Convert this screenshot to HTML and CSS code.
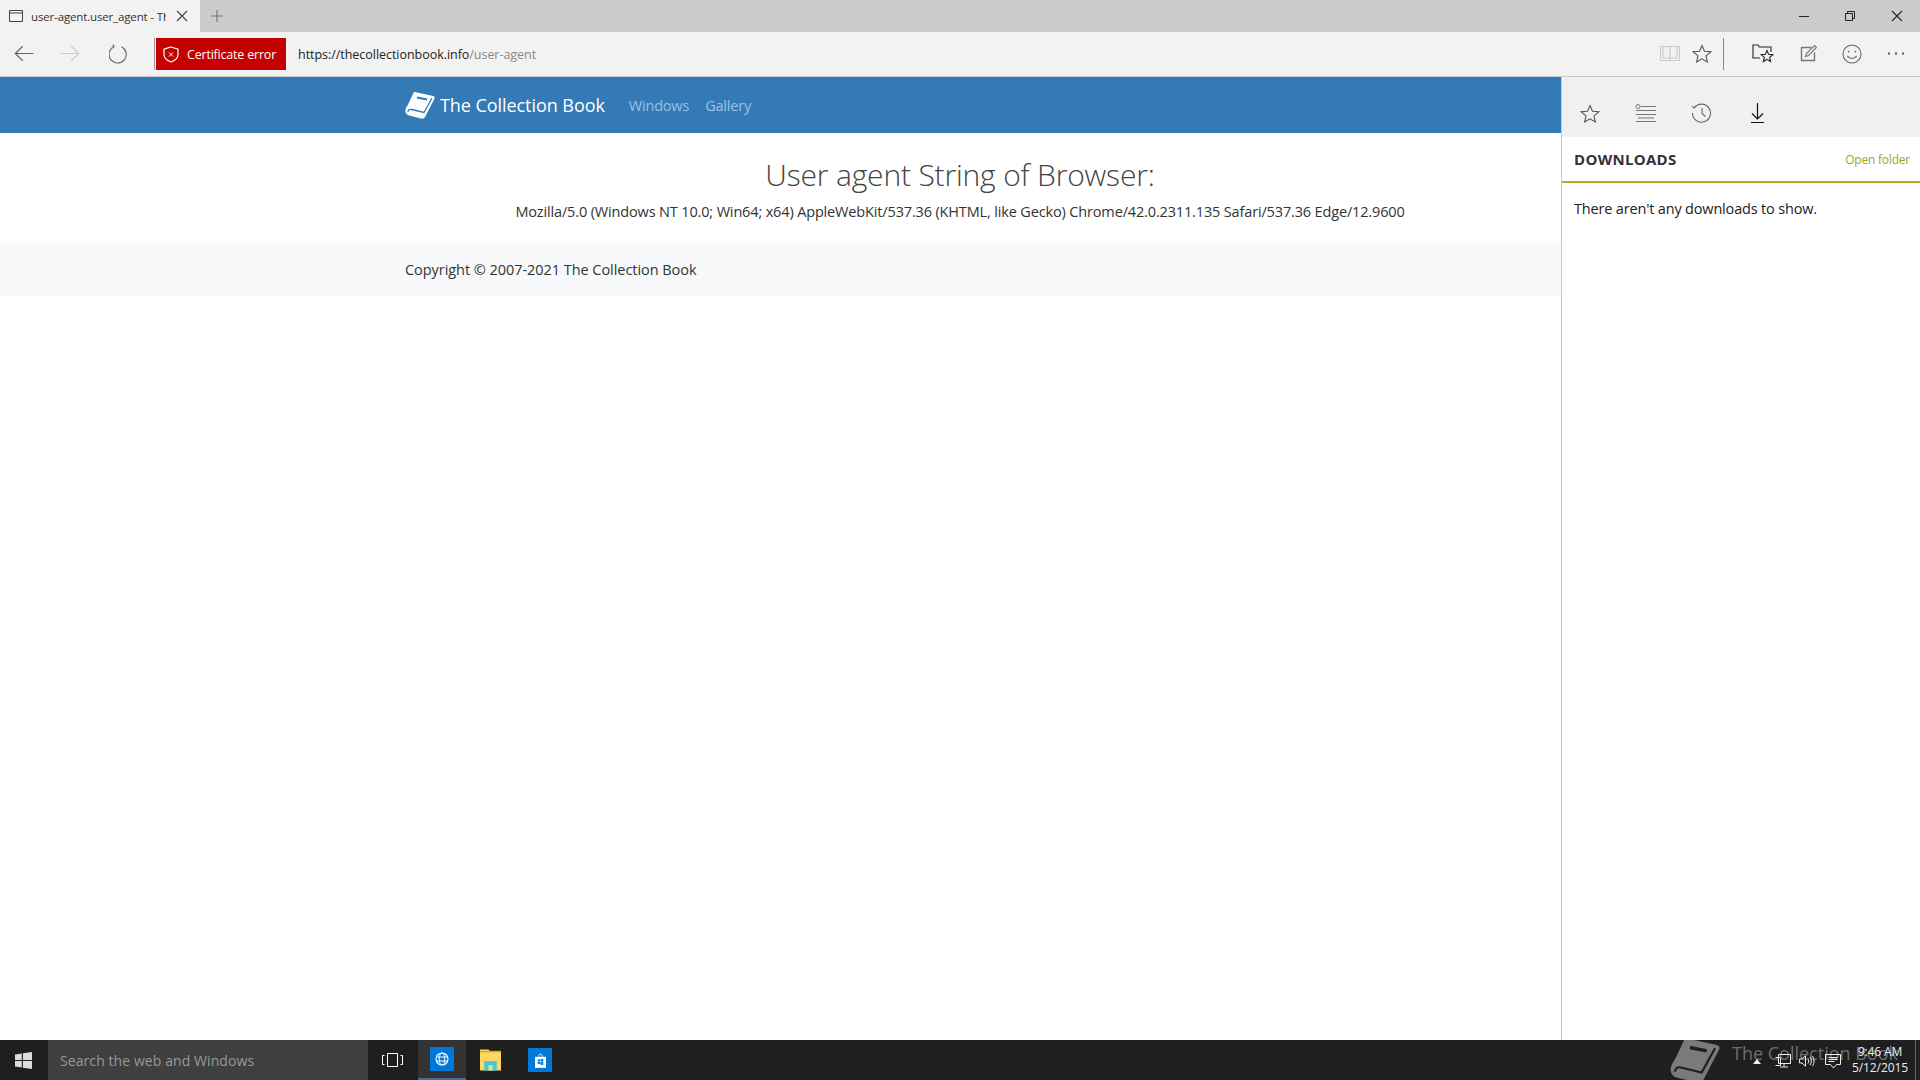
FILE: index.html
```html
<!DOCTYPE html>
<html lang="en">
<head>
<meta charset="utf-8">
<title>user-agent.user_agent - The Collection Book</title>
<link rel="stylesheet" href="styles.css">
</head>
<body>
<div class="tabstrip">
  <div class="tab">
    <svg class="tab-icon" width="14" height="12" viewBox="0 0 14 12"><path d="M.5.5h13v11H.5zM.5 3h13" fill="none" stroke="#444"/></svg>
    <span class="tab-title">user-agent.user_agent - The Collection Book</span>
    <svg class="tab-close" width="12" height="12" viewBox="0 0 12 12"><path d="M1 1l10 10M11 1L1 11" stroke="#444" stroke-width="1.1"/></svg>
  </div>
  <svg class="tab-new" width="12" height="12" viewBox="0 0 12 12"><path d="M6 0v12M0 6h12" stroke="#777" stroke-width="1.2"/></svg>
  <div class="window-controls">
    <svg width="10" height="10" viewBox="0 0 10 10"><path d="M0 5.5h10" stroke="#222"/></svg>
    <svg width="10" height="10" viewBox="0 0 10 10"><path d="M.5 2.500h7v7h-7zM2.500 2.500v-2h7v7h-2" fill="none" stroke="#222"/></svg>
    <svg width="12" height="12" viewBox="0 0 12 12"><path d="M1 1l10 10M11 1L1 11" stroke="#222" stroke-width="1.1"/></svg>
  </div>
</div>
<div class="toolbar">
  <div class="nav-group">
    <svg width="20" height="17" viewBox="0 0 20 17"><path d="M19.500 8.500H1.500M8.700 1.200L1.300 8.500l7.400 7.300" fill="none" stroke="#666" stroke-width="1.2"/></svg>
    <svg width="20" height="17" viewBox="0 0 20 17"><path d="M.5 8.500h18M11.300 1.200l7.400 7.300-7.400 7.300" fill="none" stroke="#ccc" stroke-width="1.2"/></svg>
    <svg width="19" height="20" viewBox="0 0 19 20"><path d="M5 2.600A8.600 8.600 0 1 0 12.500 2.700M3.800 .6L5.100 2.700 2.800 4.300" fill="none" stroke="#666" stroke-width="1.1"/></svg>
  </div>
  <div class="address">
    <div class="cert">
      <svg width="16" height="17" viewBox="0 0 16 17"><path d="M8 1l7 2.200v5.300c0 3.800-3.500 6.200-7 7.500-3.500-1.300-7-3.700-7-7.500V3.200z" fill="none" stroke="#fff" stroke-width="1.2"/><path d="M6 6.500l4 4M10 6.500l-4 4" stroke="#fff"/></svg>
      <span>Certificate error</span>
    </div>
    <div class="url">https://<b>thecollectionbook.info</b><i>/user-agent</i></div>
  </div>
  <div class="tool-group">
    <svg width="20" height="17" viewBox="0 0 20 17"><path d="M.5 1.500h19v14H.5zM10 1.500v14M3 1.500v11.500h7M17 1.500v11.500h-7" fill="none" stroke="#ccc" stroke-width="1.200"/></svg>
    <svg class="star" width="20" height="19" viewBox="0 0 20 19"><path d="M10 1.500l2.500 5.700 6.200.6-4.700 4.100 1.400 6.100L10 14.800 4.600 18l1.400-6.100L1.300 7.800l6.200-.6z" fill="none" stroke="#555" stroke-width="1.100"/></svg>
    <span class="tool-sep"></span>
    <svg class="hub" width="22" height="20" viewBox="0 0 22 20"><path d="M8 14H1V1h5l1.500 2H19v5" fill="none" stroke="#222" stroke-width="1.100"/><path d="M15 6.500l1.600 3.800 4.200.4-3.200 2.700 1 4.100-3.600-2.200-3.600 2.200 1-4.100-3.200-2.700 4.200-.4z" fill="#f2f2f2" stroke="#222" stroke-width="1.100"/></svg>
    <svg class="note" width="17" height="17" viewBox="0 0 17 17"><path d="M14.500 7.500v8h-13v-13h10" fill="none" stroke="#777" stroke-width="1.400"/><path d="M5.500 11.500l1-3 8-8 2 2-8 8z" fill="none" stroke="#777" stroke-width="1.200"/></svg>
    <svg class="smile" width="20" height="20" viewBox="0 0 21 21"><circle cx="10.500" cy="10.500" r="9.500" fill="none" stroke="#666" stroke-width="1.100"/><circle cx="7" cy="8" r="1" fill="#666"/><circle cx="14" cy="8" r="1" fill="#666"/><path d="M5.500 12.500c2.500 3.500 7.500 3.500 10 0" fill="none" stroke="#666" stroke-width="1.100"/></svg>
    <svg class="more" width="18" height="3" viewBox="0 0 18 3"><path d="M1 .5h2v2H1zM8 .5h2v2H8zM15 .5h2v2h-2z" fill="#555"/></svg>
  </div>
</div>
<div class="workspace">
  <main class="page">
    <nav class="site-nav">
      <div class="container nav-row">
        <svg class="logo" width="30" height="28" viewBox="0 0 30 28"><path d="M10 1l18 4c1.800.5 2 1.800 1.300 3L20 26c-1 1.500-2 2-4 1.500L4 24.500C1 23.700 0 21 .5 18.500c.5-2 1.500-3.500 2.500-5L8 3c.5-1.500 1-2.300 2-2z" fill="#fff"/><path d="M3 21c0-2 1.500-3 3.500-2.500L19 21.500 27 7" fill="none" stroke="#337ab7" stroke-width="1.300"/><path d="M12 6.500l10 2" stroke="#337ab7" stroke-width="2"/></svg>
        <span class="brand">The Collection Book</span>
        <a class="nav-link">Windows</a>
        <a class="nav-link">Gallery</a>
      </div>
    </nav>
    <section class="content">
      <h1>User agent String of Browser:</h1>
      <p>Mozilla/5.0 (Windows NT 10.0; Win64; x64) AppleWebKit/537.36 (KHTML, like Gecko) Chrome/42.0.2311.135 Safari/537.36 Edge/12.9600</p>
    </section>
    <footer class="site-footer"><div class="container">Copyright © 2007-2021 The Collection Book</div></footer>
  </main>
  <aside class="panel">
    <div class="panel-tabs">
      <svg width="20" height="19" viewBox="0 0 20 19"><path d="M10 1.500l2.500 5.700 6.200.6-4.700 4.100 1.400 6.100L10 14.800 4.600 18l1.400-6.100L1.300 7.800l6.200-.6z" fill="none" stroke="#555" stroke-width="1.100"/></svg>
      <svg width="21" height="18" viewBox="0 0 21 18"><path d="M6 2.500h15M1 6.500h20M1 10.500h20M3 14h16M1 17.500h20" stroke="#777" stroke-width="1"/><circle cx="3" cy="2.500" r="2" fill="none" stroke="#777"/></svg>
      <svg width="21" height="20" viewBox="0 0 21 20"><path d="M3.500 4.500A9 9 0 1 1 1.500 10M1 3.500l2.500 1.500 1.500-2.500M11 5v5.500l3.500 3" fill="none" stroke="#666" stroke-width="1.100"/></svg>
      <svg class="dl" width="13" height="20" viewBox="0 0 13 20"><path d="M6.500 0v16M1 10.500L6.500 16 12 10.500M0 19.500h13" fill="none" stroke="#111" stroke-width="1.200"/></svg>
    </div>
    <div class="panel-head">
      <strong>DOWNLOADS</strong>
      <a>Open folder</a>
    </div>
    <p class="panel-empty">There aren't any downloads to show.</p>
  </aside>
</div>
<div class="taskbar">
  <div class="start">
    <svg width="17" height="17" viewBox="0 0 15 15"><path d="M0 2.200l6-.9V7H0zM7 1.200L15 0v7H7zM0 8h6v5.700l-6-.9zM7 8h8v7l-8-1.200z" fill="#ddd"/></svg>
  </div>
  <div class="search">Search the web and Windows</div>
  <div class="task-view">
    <svg width="21" height="14" viewBox="0 0 21 14"><path d="M5.500.5h10v13h-10z" fill="none" stroke="#fff"/><path d="M2.500 2.500H.5v9h2M18.500 2.500h2v9h-2" fill="none" stroke="#fff"/></svg>
  </div>
  <div class="task-app active">
    <span class="app-tile"><svg width="14" height="14" viewBox="0 0 14 14"><circle cx="7" cy="7" r="6" fill="none" stroke="#fff" stroke-width="1.100"/><ellipse cx="7" cy="7" rx="2.800" ry="6" fill="none" stroke="#fff"/><path d="M1 5h12M1 9h12" stroke="#fff"/></svg></span>
  </div>
  <div class="task-app explorer">
    <svg width="21" height="22" viewBox="0 0 20 20"><path d="M0 0h8l2 2h10v18H0z" fill="#fdd663"/><path d="M0 2h20" stroke="#e6a817" stroke-width="1.500"/><path d="M4 20v-9h12v9z" fill="#4fc3d9"/><path d="M8 20v-5h4v5z" fill="#cfe98a"/></svg>
  </div>
  <div class="task-app">
    <span class="app-tile"><svg width="11" height="15" viewBox="0 0 12 16"><path d="M4 4c0-4 4-4 4 0" fill="none" stroke="#fff"/><path d="M0 4h12v12H0z" fill="#fff"/><path d="M3 7l2.500-.4V9H3zM6 6.500L9 6v3H6zM3 9.500h2.500V12L3 11.600zM6 9.500h3V13l-3-.5z" fill="#0078d7"/></svg></span>
  </div>
  <div class="tray">
    <svg class="tray-logo" width="50" height="40" viewBox="0 2 30 24"><path d="M10 1l18 4c1.800.5 2 1.800 1.300 3L20 26c-1 1.500-2 2-4 1.500L4 24.500C1 23.700 0 21 .5 18.500c.5-2 1.500-3.500 2.500-5L8 3c.5-1.500 1-2.300 2-2z" fill="#7a7a7a"/><path d="M3 21c0-2 1.500-3 3.500-2.500L19 21.500 27 7" fill="none" stroke="#1f1f1f" stroke-width="1.300"/><path d="M12 6.500l10 2" stroke="#1f1f1f" stroke-width="2"/></svg>
    <span class="tray-ghost">The Collection Book</span>
    <svg class="caret" width="8" height="5" viewBox="0 0 8 5"><path d="M0 5l4-5 4 5z" fill="#eee"/></svg>
    <svg class="net" width="16" height="14" viewBox="0 0 16 14"><path d="M3.500.5h12v9h-12zM9 9.500v3M5 13h8M.5 3.500h5v8h-5" fill="none" stroke="#eee"/></svg>
    <svg class="sound" width="16" height="12" viewBox="0 0 16 12"><path d="M.5 4h2.500L6.500.8v10.400L3 8H.5z" fill="none" stroke="#eee"/><path d="M9 3.500c1 1.500 1 3.500 0 5M11 2c1.800 2.500 1.800 5.500 0 8M13.500 1c2 3 2 7 0 10" fill="none" stroke="#eee"/></svg>
    <svg class="action" width="16" height="15" viewBox="0 0 16 15"><path d="M.5.500h15v10h-4l-3 3.500-3-3.500h-5z" fill="none" stroke="#eee"/><path d="M3.500 3.500h9M3.500 5.500h9M3.500 7.500h6" stroke="#eee"/></svg>
    <div class="clock"><span>9:46 AM</span><span>5/12/2015</span></div>
    <span class="show-desktop"></span>
  </div>
</div>
</body>
</html>
```
FILE: styles.css
```css
* { box-sizing: border-box; }
html, body { margin: 0; height: 100%; }
body {
  display: flex;
  flex-direction: column;
  height: 1080px;
  overflow: hidden;
  background: #fff;
  color: #333;
  font-family: "Open Sans", "Noto Sans", "Liberation Sans", sans-serif;
}
svg { display: block; flex: none; }

/* browser chrome */
.tabstrip {
  display: flex;
  align-items: center;
  height: 32px;
  flex: none;
  background: #cbcbcb;
}
.tab {
  display: flex;
  align-items: center;
  width: 200px;
  height: 32px;
  padding-left: 9px;
  background: #f2f2f2;
}
.tab-title {
  width: 135px;
  margin-left: 8px;
  overflow: hidden;
  white-space: nowrap;
  font-size: 11.5px;
  letter-spacing: -.15px;
  color: #333;
  flex: none;
}
.tab-close { margin-left: 10px; }
.tab-new { margin-left: 11px; }
.window-controls {
  display: flex;
  align-items: center;
  margin-left: auto;
  gap: 36px;
  padding-right: 17px;
}
.toolbar {
  display: flex;
  align-items: center;
  height: 45px;
  flex: none;
  padding-bottom: 1px;
  background: #f2f2f2;
  border-bottom: 1px solid #c8c8c8;
}
.nav-group {
  display: flex;
  align-items: center;
  gap: 26px;
  width: 156px;
  padding-left: 14px;
  height: 100%;
}
.nav-group svg:last-child { margin-left: 3px; }
.address {
  display: flex;
  align-items: center;
  height: 100%;
  flex: 1;
}
.cert {
  display: flex;
  align-items: center;
  gap: 8px;
  width: 130px;
  height: 32px;
  padding-left: 7px;
  margin-top: 1px;
  background: #c40000;
  color: #fff;
  font-size: 12.5px;
  letter-spacing: -.2px;
  box-shadow: -1px 0 0 #f2f2f2, -2px 0 0 #999;
  white-space: nowrap;
}
.url {
  margin: 1px 0 0 12px;
  font-size: 12.5px;
  letter-spacing: -.04px;
  color: #222;
}
.url b { font-weight: 400; }
.url i { font-style: normal; color: #888; }
.tool-group {
  display: flex;
  align-items: center;
  padding-right: 15px;
}
.star { margin-left: 12px; }
.tool-sep {
  width: 1px;
  height: 32px;
  margin: 0 28px 0 11px;
  background: #888;
}
.note { margin-left: 26px; }
.smile { margin-left: 25px; }
.more { margin-left: 25px; }

/* workspace */
.workspace {
  position: relative;
  flex: 1;
  min-height: 0;
}
.page { width: 100%; }
.container {
  width: 1110px;
  margin: 0 auto;
}
.site-nav {
  height: 56px;
  background: #337ab7;
}
.nav-row {
  display: flex;
  align-items: center;
  height: 100%;
}
.logo { margin-right: 5px; }
.brand {
  color: #fff;
  font-size: 18px;
  letter-spacing: -.06px;
  margin-right: 24px;
}
.nav-link {
  color: #9dc1e4;
  font-size: 14.5px;
  letter-spacing: -.2px;
  margin-right: 16px;
}
.content {
  height: 108px;
  text-align: center;
}
.content h1 {
  margin: 0;
  padding-top: 24px;
  font-size: 30px;
  line-height: 36px;
  font-weight: 300;
  letter-spacing: -.17px;
  color: #444;
}
.content p {
  margin: 9px 0 0;
  font-size: 14.5px;
  line-height: 20px;
  letter-spacing: -.15px;
  color: #333;
}
.site-footer {
  display: flex;
  align-items: center;
  height: 55px;
  padding-top: 2px;
  background: #f8f9fa;
  font-size: 14.5px;
  letter-spacing: -.05px;
}
.panel {
  position: absolute;
  top: 0;
  right: 0;
  bottom: 0;
  width: 359px;
  background: #fff;
  border-left: 1px solid #c8c8c8;
}
.panel-tabs {
  display: flex;
  align-items: center;
  gap: 35px;
  height: 60px;
  padding: 12px 0 0 18px;
  background: #f0f0f0;
}
.dl { margin-left: 4px; }
.panel-head {
  display: flex;
  align-items: center;
  justify-content: space-between;
  height: 46px;
  padding: 0 10px 0 12px;
  border-bottom: 2px solid #b1ad2b;
}
.panel-head strong {
  font-size: 15px;
  font-weight: 700;
  letter-spacing: .3px;
  color: #333;
}
.panel-head a {
  font-size: 12px;
  letter-spacing: -.22px;
  color: #a6a21c;
}
.panel-empty {
  margin: 16px 0 0 12px;
  font-size: 14.5px;
  line-height: 20px;
  letter-spacing: -.17px;
  color: #222;
}

/* taskbar */
.taskbar {
  display: flex;
  align-items: stretch;
  height: 40px;
  flex: none;
  overflow: hidden;
  background: #1f1f1f;
}
.start {
  display: flex;
  align-items: center;
  justify-content: center;
  width: 47px;
  margin-right: 1px;
}
.search {
  display: flex;
  align-items: center;
  width: 320px;
  padding-left: 12px;
  background: #3f3f3f;
  color: #999;
  font-size: 14px;
  letter-spacing: .08px;
}
.task-view {
  display: flex;
  align-items: center;
  justify-content: center;
  width: 50px;
  padding-right: 2px;
}
.task-app {
  display: flex;
  align-items: center;
  justify-content: center;
  width: 50px;
}
.task-app.explorer { width: 49px; }
.task-app.active {
  width: 48px;
  background: #333;
  border-bottom: 2px solid #3c6e9f;
}
.app-tile {
  display: flex;
  align-items: center;
  justify-content: center;
  width: 24px;
  height: 24px;
  background: #0078d7;
}
.tray {
  position: relative;
  display: flex;
  align-items: center;
  margin-left: auto;
  color: #eee;
}
.tray-logo {
  position: absolute;
  left: -83px;
  top: 0;
}
.tray-ghost {
  position: absolute;
  left: -21px;
  top: 1px;
  white-space: nowrap;
  font-size: 18px;
  color: #6e6e6e;
}
.caret { margin: 3px 14px 0 0; position: relative; }
.net { margin: 2px 8px 0 0; position: relative; }
.sound { margin: 1px 10px 0 0; position: relative; }
.action { margin: 2px 9px 0 0; position: relative; }
.clock {
  position: relative;
  display: flex;
  flex-direction: column;
  align-items: center;
  width: 60px;
  font-size: 12px;
  line-height: 16px;
  letter-spacing: -.1px;
}
.show-desktop {
  width: 1px;
  height: 100%;
  margin: 0 4px 0 5px;
  background: #666;
}
```
